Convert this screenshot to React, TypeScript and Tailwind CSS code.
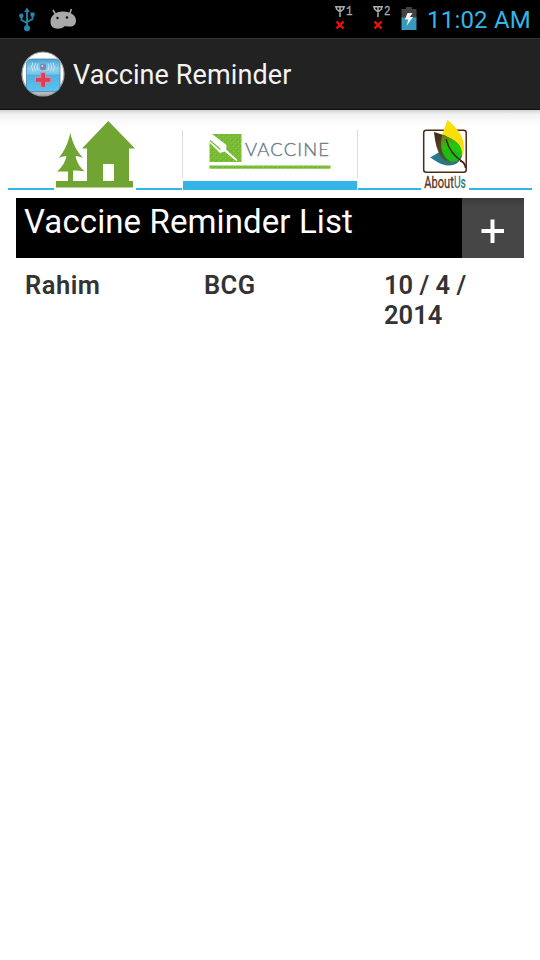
import React from "react";

function UsbIcon() {
  return (
    <svg width="18" height="26" viewBox="0 0 18 26" fill="none" stroke="#2687ad" strokeWidth="1.800">
      <path d="M9 4v17M3.500 9v4l5.500 3M14.500 8v4L9 15" />
      <path d="M9 0.500l2.800 4.500H6.200z" fill="#2687ad" stroke="none" />
      <circle cx="9" cy="21.300" r="3" fill="#2687ad" stroke="none" />
      <circle cx="3.300" cy="8.800" r="2.200" fill="#2687ad" stroke="none" />
      <rect x="12.500" y="5.500" width="4" height="4" fill="#2687ad" stroke="none" />
    </svg>
  );
}

function DroidIcon() {
  return (
    <svg width="28" height="24" viewBox="0 0 28 24">
      <path d="M4 3l3 5M22.500 2l-2 5" stroke="#aaa" strokeWidth="1.500" />
      <path d="M1.500 15C1.500 9 6 4.500 14 4.500 22 4.500 27 8.500 27 13.500c0 4-2.500 6-6 6-2.500 0-3.500-.5-5.500-.3-2 1.800-4 2.500-7 2.500-4 0-7-2.200-7-6.700z" fill="#a9a9a9" />
      <circle cx="8.500" cy="11" r="1.200" fill="#111" />
      <circle cx="18" cy="10.500" r="1.200" fill="#111" />
    </svg>
  );
}

function Signal({ sim }: { sim: string }) {
  return (
    <svg width="20" height="28" viewBox="0 0 20 28">
      <path d="M0 1.700h10M1.500 2v2l3.500 3 3.500-3V2M5 1v11" stroke="#aaa" strokeWidth="1.600" fill="none" />
      <text x="11" y="10" fontSize="13" textLength="6.500" lengthAdjust="spacingAndGlyphs" fill="#aaa" stroke="#aaa" strokeWidth="0.300" fontFamily="Liberation Mono, monospace">{sim}</text>
      <path d="M1.500 16.500l7 7M8.500 16.500l-7 7" stroke="#fb0b0b" strokeWidth="2.300" />
    </svg>
  );
}

function Battery() {
  return (
    <svg width="16" height="24" viewBox="0 0 16 24">
      <path d="M0.500 2H5V0h6v2h4.500v9H.5z" fill="#424242" />
      <rect x="0.500" y="10.500" width="15" height="12.500" fill="#3999bd" />
      <path d="M6.500 6L4 12.500h3.300L5.500 19 12 10H9L11.500 6z" fill="#f4f4f4" />
    </svg>
  );
}

function AppIcon() {
  return (
    <svg width="44" height="46" viewBox="0 0 44 46">
      <defs>
        <linearGradient id="rim" x1="0" y1="0" x2="0" y2="1">
          <stop offset="0.700" stopColor="#fff" />
          <stop offset="1" stopColor="#a9a5a5" />
        </linearGradient>
        <linearGradient id="glass" x1="0" y1="0" x2="0" y2="1">
          <stop offset="0" stopColor="#4aa3d2" />
          <stop offset="0.300" stopColor="#8fceec" />
          <stop offset="0.450" stopColor="#7cc6e8" />
          <stop offset="0.500" stopColor="#4fb0e0" />
          <stop offset="1" stopColor="#5dc2f0" />
        </linearGradient>
      </defs>
      <ellipse cx="22" cy="23" rx="21" ry="22" fill="url(#rim)" stroke="#a2a2a2" strokeWidth="1.200" />
      <rect x="5.500" y="8" width="33.500" height="32.500" rx="5" fill="url(#glass)" stroke="#4289b4" strokeWidth="0.800" />
      <path d="M17 12.500q-2 3.500 0 7M14.500 12q-2.500 4 0 8M12 11.500q-3 4.500 0 9M27 12.500q2 3.500 0 7M29.500 12q2.500 4 0 8M32 11.500q3 4.500 0 9" fill="none" stroke="#d3edfa" strokeWidth="0.800" />
      <circle cx="22" cy="16" r="3.200" fill="#7b86b4" />
      <circle cx="21.300" cy="15" r="1" fill="#d4d7ef" />
      <path d="M19.800 21.500h4.700v5h5.200v4.700h-5.200v5h-4.700v-5h-5.300v-4.700h5.300z" fill="#e63a53" stroke="#ef9ba9" strokeWidth="0.600" />
    </svg>
  );
}

function HomeLogo() {
  return (
    <svg width="82" height="70" viewBox="54 120 82 70" fill="#70a533">
      <path d="M108.300 121L135 148.500h-6V181h4v6.500H56V181h12v-9.500H57c4-3.500 8-8 9.500-15.500-3 .3-5 .8-7.500 2 5-7 9-14 11.300-25 2.500 11 6.500 18 12.700 25-2.500-1.200-4.500-1.700-7.500-2 1.500 7.500 5 12 9.500 15.500-4-1-8-1-12-1V181h14v-32.500h-5zM103 164v17h11v-17z" fillRule="evenodd" />
    </svg>
  );
}

function VaccineLogo() {
  return (
    <svg width="124" height="38" viewBox="208 133 124 38">
      <defs>
        <pattern id="speckle" width="5" height="5" patternUnits="userSpaceOnUse">
          <path d="M0 0h5v5H0z" fill="#7abd35" />
          <path d="M1 0h1v1H1zM4 2h1v1H4zM2 4h1v1H2z" fill="#69ad42" />
          <path d="M3 1h1v1H3zM0 3h1v1H0z" fill="#8bce33" />
        </pattern>
      </defs>
      <path d="M209.500 134H241.500v28h-32z" fill="url(#speckle)" />
      <path d="M209 134h3l14.500 11-.3 4.500L237.500 160l-.9 1.300-12.100-9.800-4.500 1.500L209 142z" fill="#fff" />
      <path d="M210 140.500l10.500 9" stroke="#76ba36" strokeWidth="1.200" />
      <text x="245" y="156" textLength="84" lengthAdjust="spacing" fontSize="18.500" fontWeight="300" fontFamily="Lato, sans-serif" fill="#5d7080" stroke="#71808d" strokeWidth="0.350">VACCINE</text>
      <path d="M209.500 165.500h121v3.300h-121z" fill="url(#speckle)" />
    </svg>
  );
}

function AboutLogo() {
  return (
    <svg width="48" height="72" viewBox="421 118 48 72">
      <defs>
        <linearGradient id="brown" x1="0" y1="0" x2="1" y2="1">
          <stop offset="0" stopColor="#3b2415" />
          <stop offset="0.350" stopColor="#554222" />
          <stop offset="1" stopColor="#1f8c33" />
        </linearGradient>
        <linearGradient id="teal" x1="0" y1="0" x2="1" y2="0">
          <stop offset="0" stopColor="#237d95" />
          <stop offset="1" stopColor="#456673" />
        </linearGradient>
        <linearGradient id="overlap" x1="0" y1="0" x2="0.500" y2="1">
          <stop offset="0.200" stopColor="#6b7a10" />
          <stop offset="0.600" stopColor="#27c40f" />
          <stop offset="1" stopColor="#12cf12" />
        </linearGradient>
        <clipPath id="yellowLeaf"><path d="M447.500 120c-3 8-6.500 16-6.500 23.500 0 10 6 18 13 19 6-1 10-7 10-16 0-11-9-21-16.500-26.500z" /></clipPath>
      </defs>
      <rect x="423.700" y="130.200" width="42.500" height="42" rx="2.500" fill="#fff" stroke="#4a2b19" strokeWidth="1.500" />
      <path d="M447.500 120c-3 8-6.500 16-6.500 23.500 0 10 6 18 13 19 6-1 10-7 10-16 0-11-9-21-16.500-26.500z" fill="#f8df0c" />
      <path d="M430 157.500c5-3 9-5 13-7.500 7-2 14 0 19 6-2 6-7 10-14 9.500-7-.5-12-4.500-18-8z" fill="url(#teal)" />
      <path d="M434 132c11 3 20 7 25 13 4 6 3 12-1 15-7 4-14 2-18-5-4-7-5-15-6-23z" fill="url(#brown)" />
      <g clipPath="url(#yellowLeaf)">
        <path d="M434 132c11 3 20 7 25 13 4 6 3 12-1 15-7 4-14 2-18-5-4-7-5-15-6-23z" fill="url(#overlap)" />
        <path d="M441 150c8-2 15 0 22 5-2 6-6 9-14 9z" fill="#1f9e26" fillOpacity="0.350" />
      </g>
      <path d="M446 139c3 12 9 18 17 23l2.500 4" fill="none" stroke="#4a2112" strokeWidth="1.400" />
      <path d="M460 161q5 1 5.500 7" fill="none" stroke="#4a2112" strokeWidth="1.500" />
      <g transform="translate(424.300 187.500) scale(0.720 1)" fontSize="16" fontFamily="Roboto, sans-serif" strokeWidth="0.300">
        <text textLength="41" lengthAdjust="spacingAndGlyphs" fill="#563625" stroke="#563625">About</text>
        <text x="41.200" textLength="16.500" lengthAdjust="spacingAndGlyphs" fill="#2b7284" stroke="#2b7284">Us</text>
      </g>
    </svg>
  );
}

export default function App() {
  return (
    <div className="flex h-[960px] w-[540px] flex-col bg-white font-['Roboto',sans-serif]">
      <header className="flex h-[38px] items-start bg-black">
        <div className="ml-[18px] mt-[7px]"><UsbIcon /></div>
        <div className="ml-[13px] mt-[7px]"><DroidIcon /></div>
        <div className="ml-auto mt-[5px]"><Signal sim="1" /></div>
        <div className="ml-[18px] mt-[5px]"><Signal sim="2" /></div>
        <div className="ml-2 mt-[7px]"><Battery /></div>
        <div className="ml-[10px] mr-[11px] mt-1 w-[102px] whitespace-nowrap text-[24px] leading-8 tracking-[0.2px] text-[#33b5e5]">11:02 AM</div>
      </header>
      <div className="flex h-[72px] items-center border-b border-[#111] border-t border-t-[#333] bg-[#222] pl-[21px]">
        <AppIcon />
        <h1 className="ml-2 whitespace-nowrap pt-0.5 text-[27px] leading-8 tracking-[0.1px] text-[#f3f3f3]">Vaccine Reminder</h1>
      </div>
      <nav className="flex h-20 bg-linear-to-b from-[#d0d0d0] via-[#f2f2f2] via-5% to-white to-20% px-2">
        <div className="flex w-[174px] items-end">
          <div className="h-0.5 flex-1 bg-[#33b5e5]" />
          <HomeLogo />
          <div className="h-0.5 flex-1 bg-[#33b5e5]" />
        </div>
        <div className="mt-5 h-12 w-px bg-[#ddd]" />
        <div className="flex w-[174px] flex-col items-center justify-between border-b-[9px] border-[#33b5e5] pt-[23px]">
          <VaccineLogo />
        </div>
        <div className="mt-5 h-12 w-px bg-[#ddd]" />
        <div className="flex w-[174px] items-end">
          <div className="h-0.5 flex-1 bg-[#33b5e5]" />
          <AboutLogo />
          <div className="h-0.5 flex-1 bg-[#33b5e5]" />
        </div>
      </nav>
      <main className="px-4 pt-2">
        <div className="flex h-[60px] bg-black">
          <h2 className="flex-1 whitespace-nowrap pl-2 pt-1 text-[33px] leading-10 tracking-[0.1px] text-white">Vaccine Reminder List</h2>
          <button className="flex w-[62px] items-center justify-center bg-linear-to-b from-[#3b3b3b] via-[#464646] via-15% to-[#464646] pt-1.5" aria-label="Add">
            <svg width="24" height="24" viewBox="0 0 24 24"><path d="M0.500 12h22.500M11.500 0.500v23.500" stroke="#fff" strokeWidth="4" /></svg>
          </button>
        </div>
        <div className="flex pl-[9px] pt-3 text-[25.5px] font-semibold leading-[30px] text-[#333]">
          <div className="w-[179px] tracking-[0.5px]">Rahim</div>
          <div className="w-[180px] tracking-[0.4px]">BCG</div>
          <div className="w-[120px]">10 / 4 /<br />2014</div>
        </div>
      </main>
    </div>
  );
}
